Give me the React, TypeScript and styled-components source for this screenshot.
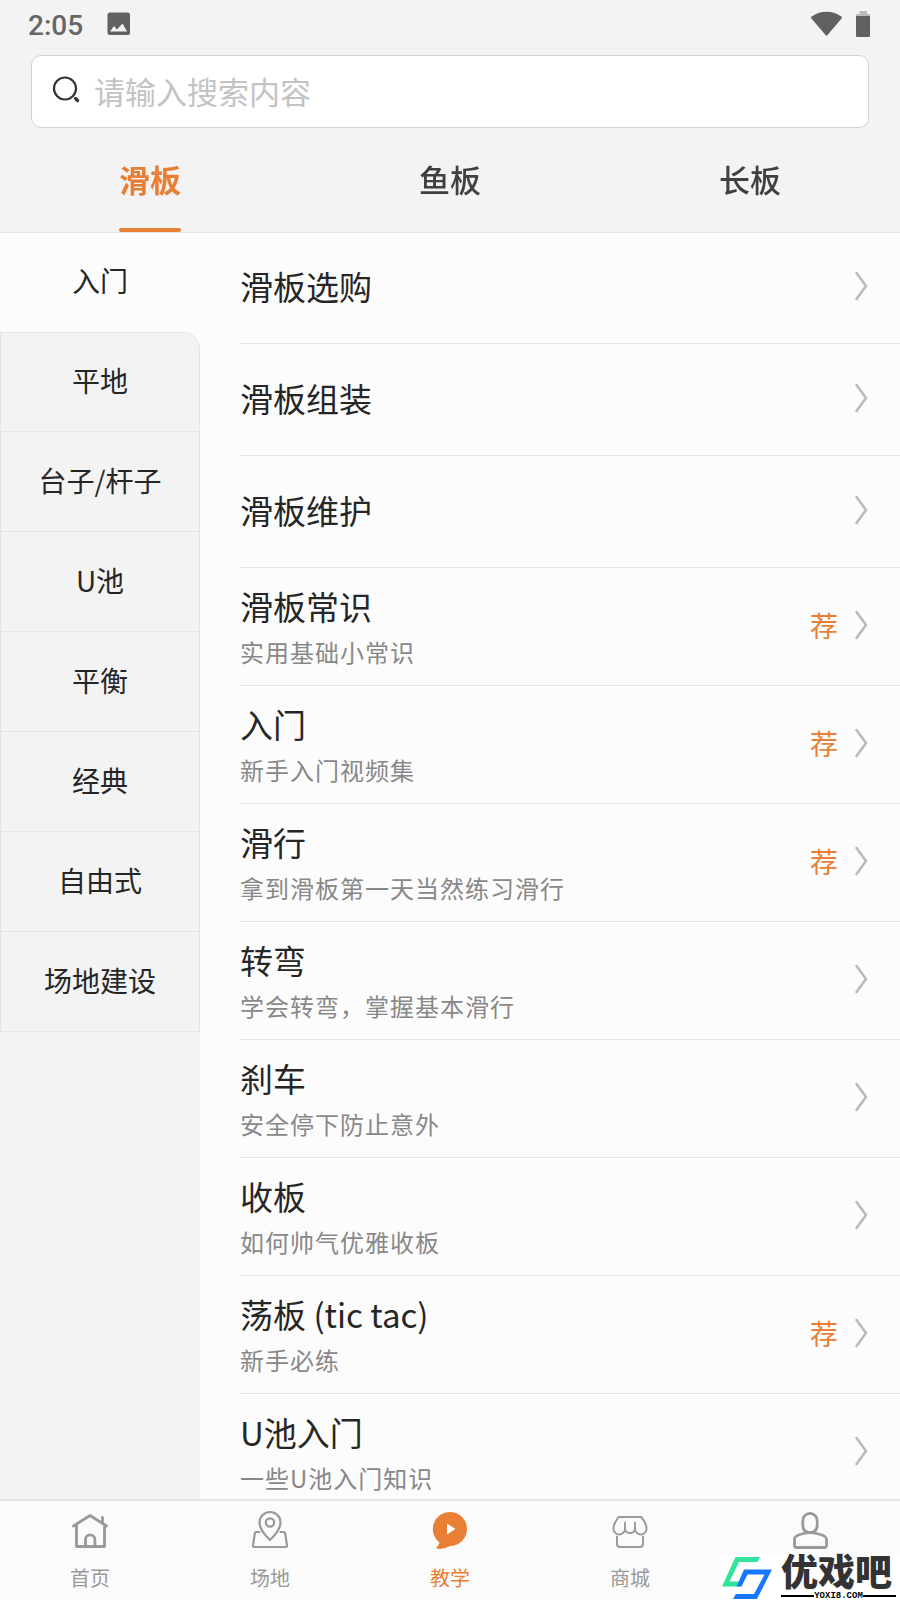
import React from "react";
import styled, { createGlobalStyle } from "styled-components";

const ORANGE = "#e97f34";
const LINE = "#e4e4e4";
const PAPER = "#fcfcfc";
const SHADE = "#f3f3f3";

const GlobalStyle = createGlobalStyle`
  * { box-sizing: border-box; }
  body {
    margin: 0;
    background: ${SHADE};
    color: #262626;
    font-family: "Noto Sans CJK SC", sans-serif;
  }
  button, input { font: inherit; color: inherit; }
  button { border: 0; padding: 0; background: none; cursor: pointer; }
  a { color: inherit; text-decoration: none; }
  ul { list-style: none; margin: 0; padding: 0; }
  svg { display: block; flex: none; }
`;

const Screen = styled.div`
  display: flex;
  flex-direction: column;
  height: 100vh;
`;

const StatusBar = styled.header`
  display: flex;
  align-items: center;
  gap: 24px;
  height: 48px;
  padding: 0 30px 0 28px;
  flex: none;
`;

const Clock = styled.time`
  padding-top: 4px;
  font: 500 28px/44px Roboto, sans-serif;
  color: #666;
`;

const StatusIcons = styled.div`
  display: flex;
  gap: 14px;
  margin-left: auto;
`;

const SearchBox = styled.label`
  display: flex;
  align-items: center;
  gap: 14px;
  flex: none;
  height: 73px;
  margin: 7px 31px 0;
  padding: 0 20px;
  border: 1px solid #d2d2d2;
  border-radius: 10px;
  background: #fff;
`;

const SearchInput = styled.input`
  flex: 1;
  min-width: 0;
  height: 71px;
  padding: 0 0 2px;
  border: 0;
  outline: 0;
  background: transparent;
  font-size: 31px;
  &::placeholder { color: #c3c3c3; opacity: 1; }
`;

const Tabs = styled.nav`
  position: relative;
  display: flex;
  flex: none;
  height: 104px;
  box-shadow: 0 1px ${LINE};
`;

const Tab = styled.button<{ $active?: boolean }>`
  display: flex;
  flex: 1;
  flex-direction: column;
  align-items: center;
  justify-content: space-between;
  padding-top: 28px;
  font-size: 31px;
  line-height: 46px;
  font-weight: ${(p) => (p.$active ? 700 : 500)};
  color: ${(p) => (p.$active ? ORANGE : "#404040")};
  &::after {
    content: "";
    width: 62px;
    height: 4px;
    border-radius: 2px;
    background: ${(p) => (p.$active ? ORANGE : "transparent")};
  }
`;

const Body = styled.div`
  display: flex;
  flex: 1;
  min-height: 0;
`;

const Sidebar = styled.nav`
  flex: none;
  width: 200px;
  background: linear-gradient(${PAPER} 120px, ${SHADE} 120px);
`;

const Category = styled.button<{ $active?: boolean }>`
  display: block;
  width: 100%;
  height: 100px;
  padding-bottom: 4px;
  border: solid ${LINE};
  border-width: ${(p) => (p.$active ? "0" : "0 1px 1px")};
  background: ${(p) => (p.$active ? "transparent" : SHADE)};
  font-size: 28px;
  &:nth-child(2) {
    border-top-width: 1px;
    border-top-right-radius: 16px;
  }
`;

const Lessons = styled.ul`
  flex: 1;
  min-width: 0;
  padding-left: 40px;
  overflow-y: auto;
  scrollbar-width: none;
  background: ${PAPER};
`;

const Lesson = styled.li`
  border-bottom: 1px solid ${LINE};
`;

const LessonLink = styled.a<{ $tall: boolean }>`
  display: flex;
  align-items: center;
  gap: 16px;
  height: ${(p) => (p.$tall ? 117 : 111)}px;
  padding: 0 32px 4px 0;
`;

const LessonText = styled.div<{ $tall: boolean }>`
  flex: 1;
  min-width: 0;
  padding-top: ${(p) => (p.$tall ? 3 : 0)}px;
`;

const Title = styled.div`
  font-size: 33px;
  line-height: 48px;
`;

const Subtitle = styled.div`
  margin-top: 3px;
  font-size: 24px;
  line-height: 38px;
  letter-spacing: 1px;
  color: #888;
`;

const Pick = styled.span`
  font-size: 28px;
  line-height: 40px;
  color: ${ORANGE};
`;

const BottomNav = styled.nav`
  position: relative;
  display: flex;
  flex: none;
  height: 101px;
  border-top: 2px solid #e6e6e6;
  background: #fbfbfb;
`;

const NavItem = styled.a<{ $active?: boolean }>`
  display: flex;
  flex: 1;
  flex-direction: column;
  align-items: center;
  gap: 12px;
  padding-top: 9px;
  font-size: 20px;
  line-height: 32px;
  color: ${(p) => (p.$active ? ORANGE : "#999")};
`;

const Watermark = styled.div`
  position: absolute;
  right: 0;
  bottom: 0;
  display: flex;
  gap: 8px;
  width: 180px;
  height: 44px;
  padding-right: 4px;
  background: #fff;
  color: #333;
`;

const Brand = styled.div`
  display: flex;
  flex: 1;
  flex-direction: column;
  justify-content: space-between;
`;

const BrandName = styled.div`
  font-size: 37px;
  font-weight: 900;
  line-height: 28px;
  white-space: nowrap;
`;

const Domain = styled.div`
  display: flex;
  align-items: center;
  color: #000;
  font: bold 9px/8px "Liberation Mono", monospace;
  &::before, &::after {
    content: "";
    flex: 1;
    height: 2px;
    background: #000;
  }
`;

const tabs = ["滑板", "鱼板", "长板"];
const categories = ["入门", "平地", "台子/杆子", "U池", "平衡", "经典", "自由式", "场地建设"];
const lessons: { title: string; sub?: string; pick?: boolean }[] = [
  { title: "滑板选购" },
  { title: "滑板组装" },
  { title: "滑板维护" },
  { title: "滑板常识", sub: "实用基础小常识", pick: true },
  { title: "入门", sub: "新手入门视频集", pick: true },
  { title: "滑行", sub: "拿到滑板第一天当然练习滑行", pick: true },
  { title: "转弯", sub: "学会转弯，掌握基本滑行" },
  { title: "刹车", sub: "安全停下防止意外" },
  { title: "收板", sub: "如何帅气优雅收板" },
  { title: "荡板 (tic tac)", sub: "新手必练", pick: true },
  { title: "U池入门", sub: "一些U池入门知识" },
];

const PictureIcon = () => (
  <svg width="24" height="24" viewBox="0 0 24 24">
    <rect x="0.500" y="0.500" width="22.500" height="22.500" rx="2.500" fill="#616161" />
    <path d="M3 19.500 7 14l3 3.600L15.500 11.500 20 19.500Z" fill={SHADE} />
  </svg>
);

const WifiIcon = () => (
  <svg width="31" height="26" viewBox="0 0 31 26">
    <path d="M0 6Q7 .7 15.500 .7T31 6V7L16.500 24q-1 1.200-2 0L0 7Z" fill="#616161" />
  </svg>
);

const BatteryIcon = () => (
  <svg width="14" height="26" viewBox="0 0 14 26">
    <path d="M0 5V4Q0 3 1 3H3.500V.5Q3.500 0 4 0H10.500Q11 0 11 .5V3H13Q14 3 14 4V5Z" fill="#bcbcbc" />
    <path d="M0 5H14V25Q14 26 13 26H1Q0 26 0 25Z" fill="#616161" />
  </svg>
);

const SearchIcon = () => (
  <svg width="28" height="32" viewBox="0 0 28 32" fill="none" stroke="#333">
    <circle cx="13" cy="12.500" r="11" strokeWidth="2.200" />
    <path d="M23.500 22.500 25.500 24.500" strokeWidth="3.200" strokeLinecap="round" />
  </svg>
);

const ArrowIcon = () => (
  <svg width="14" height="30" viewBox="0 0 14 30" fill="none" stroke="#bababc" strokeWidth="2.600" strokeLinecap="round" strokeLinejoin="round">
    <path d="M2.500 2 12 15 2.500 28" />
  </svg>
);

const HomeIcon = () => (
  <svg width="40" height="40" viewBox="0 0 40 40" fill="none" stroke="#999" strokeWidth="2.800" strokeLinecap="round" strokeLinejoin="round">
    <path d="M3.500 16 20 5.500 36.500 16M6.500 14.500V36.500H34.500V14.500M32.500 13V7.500" />
    <path d="M15.500 36V29.500a4.700 4.700 0 0 1 9.400 0V36" />
  </svg>
);

const PlaceIcon = () => (
  <svg width="40" height="40" viewBox="0 0 40 40" fill="none" stroke="#999" strokeWidth="2.200" strokeLinecap="round" strokeLinejoin="round">
    <path d="M20 30Q9.500 20 9.500 12.500a10.500 10.500 0 0 1 21 0Q30.500 20 20 30Z" />
    <circle cx="20" cy="12.500" r="4.200" />
    <path d="M9.500 22H6.500Q5 22 4.800 23.500L3 35.500Q2.800 37 4.300 37H35.700Q37.200 37 37 35.500L35.200 23.500Q35 22 33.500 22H30.500" />
  </svg>
);

const TeachIcon = () => (
  <svg width="40" height="40" viewBox="0 0 40 40">
    <path d="M20 2a17 17 0 0 1 0 34Q13 40 6.500 38.500 6 38 6.500 37.500 9 35.500 9.500 32.500A17 17 0 0 1 20 2Z" fill={ORANGE} />
    <path d="M17 13.500 25.500 19 17 24.500Z" fill="#fff" />
  </svg>
);

const ShopIcon = () => (
  <svg width="40" height="40" viewBox="0 0 40 40" fill="none" stroke="#999" strokeWidth="1.900" strokeLinecap="round" strokeLinejoin="round">
    <path d="M8.500 7H31.500Q36.500 14 36.500 18a5.800 5.800 0 0 1-11.500 1.500 5.300 5.300 0 0 1-10 0A5.800 5.800 0 0 1 3.500 18Q3.500 14 8.500 7Z" />
    <path d="M15 12.500V19.500M25 12.500V19.500M7 26.500V34Q7 37 10 37H30Q33 37 33 34V26.500" />
  </svg>
);

const ProfileIcon = () => (
  <svg width="40" height="40" viewBox="0 0 40 40" fill="none" stroke="#999" strokeWidth="2.800" strokeLinecap="round" strokeLinejoin="round">
    <path d="M12.800 10.500a7.200 7.200 0 0 1 14.400 0V16Q26.500 22.500 20 22.500T12.800 16Z" />
    <path d="M13.500 23.500Q20 21.500 26.500 23.500 36.500 25.500 36.500 29V35.500Q36.500 37.500 34 37.500H6.500Q4.500 37.500 4.500 35.500V29Q4.500 25.500 13.500 23.500Z" />
  </svg>
);

const BrandMark = () => (
  <svg width="53" height="44" viewBox="0 0 53 44">
    <path d="M15.500 1H40L37.500 6H19L9.500 25.500H22L19.500 30.500H2Z" fill="#2fe59c" />
    <path d="M24 13.500H52L37 43H13L15.800 38H34L44.500 18.500H27.500L21.500 30.500H16.500Z" fill="#1877ff" />
  </svg>
);

const navItems = [
  { label: "首页", icon: <HomeIcon /> },
  { label: "场地", icon: <PlaceIcon /> },
  { label: "教学", icon: <TeachIcon />, active: true },
  { label: "商城", icon: <ShopIcon /> },
];

export default function App() {
  return (
    <>
      <GlobalStyle />
      <Screen>
        <StatusBar>
          <Clock>2:05</Clock>
          <PictureIcon />
          <StatusIcons>
            <WifiIcon />
            <BatteryIcon />
          </StatusIcons>
        </StatusBar>
        <SearchBox>
          <SearchIcon />
          <SearchInput type="text" placeholder="请输入搜索内容" />
        </SearchBox>
        <Tabs>
          {tabs.map((name, i) => (
            <Tab key={name} type="button" $active={i === 0}>{name}</Tab>
          ))}
        </Tabs>
        <Body>
          <Sidebar>
            {categories.map((name, i) => (
              <Category key={name} type="button" $active={i === 0}>{name}</Category>
            ))}
          </Sidebar>
          <Lessons>
            {lessons.map(({ title, sub, pick }) => (
              <Lesson key={title}>
                <LessonLink href="#" $tall={!!sub}>
                  <LessonText $tall={!!sub}>
                    <Title>{title}</Title>
                    {sub && <Subtitle>{sub}</Subtitle>}
                  </LessonText>
                  {pick && <Pick>荐</Pick>}
                  <ArrowIcon />
                </LessonLink>
              </Lesson>
            ))}
          </Lessons>
        </Body>
        <BottomNav>
          {navItems.map(({ label, icon, active }) => (
            <NavItem key={label} href="#" $active={active}>
              {icon}
              {label}
            </NavItem>
          ))}
          <NavItem href="#" aria-label="我的">
            <ProfileIcon />
          </NavItem>
          <Watermark>
            <BrandMark />
            <Brand>
              <BrandName>优戏吧</BrandName>
              <Domain>YOXI8.COM</Domain>
            </Brand>
          </Watermark>
        </BottomNav>
      </Screen>
    </>
  );
}
